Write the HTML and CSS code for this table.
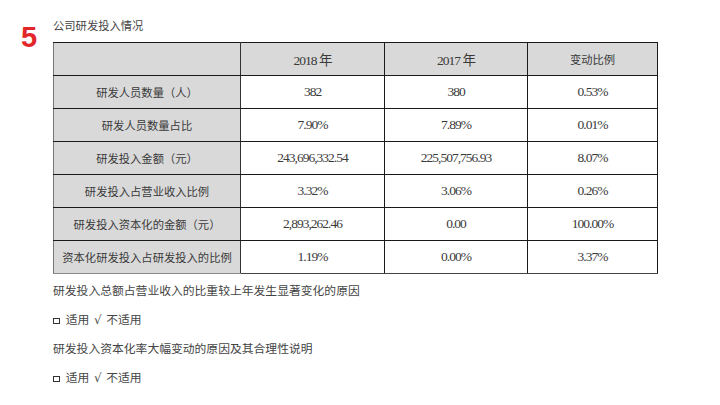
FILE: index.html
```html
<!DOCTYPE html>
<html lang="zh">
<head>
<meta charset="utf-8">
<link rel="stylesheet" href="styles.css">
</head>
<body>
<div class="page">
  <div class="num">5</div>
  <div class="content">
    <div class="title">公司研发投入情况</div>
    <table class="rd">
      <colgroup>
        <col class="c1"><col class="c2"><col class="c3"><col class="c4">
      </colgroup>
      <tr class="head">
        <td class="label"></td><td>2018 年</td><td>2017 年</td><td class="cn">变动比例</td>
      </tr>
      <tr><td class="label">研发人员数量（人）</td><td>382</td><td>380</td><td>0.53%</td></tr>
      <tr><td class="label">研发人员数量占比</td><td>7.90%</td><td>7.89%</td><td>0.01%</td></tr>
      <tr><td class="label">研发投入金额（元）</td><td>243,696,332.54</td><td>225,507,756.93</td><td>8.07%</td></tr>
      <tr><td class="label">研发投入占营业收入比例</td><td>3.32%</td><td>3.06%</td><td>0.26%</td></tr>
      <tr><td class="label">研发投入资本化的金额（元）</td><td>2,893,262.46</td><td>0.00</td><td>100.00%</td></tr>
      <tr><td class="label">资本化研发投入占研发投入的比例</td><td>1.19%</td><td>0.00%</td><td>3.37%</td></tr>
    </table>
    <p class="line first">研发投入总额占营业收入的比重较上年发生显著变化的原因</p>
    <p class="line"><span class="box"></span> 适用 <span class="chk">√</span> 不适用</p>
    <p class="line">研发投入资本化率大幅变动的原因及其合理性说明</p>
    <p class="line"><span class="box"></span> 适用 <span class="chk">√</span> 不适用</p>
  </div>
</div>
</body>
</html>
```

FILE: styles.css
```css
html, body {
  margin: 0;
  padding: 0;
  background: #ffffff;
}
.page {
  width: 720px;
  height: 405px;
  display: flex;
  font-family: "Liberation Serif", "Noto Sans CJK SC", serif;
  color: #3a3a3a;
}
.num {
  width: 53px;
  box-sizing: border-box;
  padding: 23px 0 0 21px;
  font-family: "Liberation Sans", Arial, sans-serif;
  font-weight: bold;
  font-size: 29px;
  color: #e3262a;
  line-height: 29px;
}
.content {
  padding-top: 16px;
}
.title {
  font-family: "Noto Sans CJK SC", sans-serif;
  font-size: 11.3px;
  line-height: 18px;
  height: 18px;
  margin-bottom: 8px;
  color: #444;
}
.rd {
  border-collapse: collapse;
  table-layout: fixed;
  width: 604px;
}
.c1 { width: 187px; }
.c2 { width: 144px; }
.c3 { width: 143px; }
.c4 { width: 130px; }
.rd td {
  height: 32px;
  padding: 0;
  text-align: center;
  border: 1.3px solid #1a1a1a;
  font-size: 13.5px;
  letter-spacing: -1px;
  color: #3a3a3a;
  font-family: "Liberation Serif", "Noto Sans CJK SC", serif;
  white-space: nowrap;
}
.rd td.label,
.rd td.cn {
  font-family: "Noto Sans CJK SC", sans-serif;
  font-size: 11.3px;
  letter-spacing: 0;
}
.rd td.label {
  background: #d9d9d9;
  border-left-color: #777;
  border-right-color: #333;
}
.rd tr.head td {
  background: #d9d9d9;
}
.rd tr:last-child td {
  border-bottom-color: #444;
}
.rd tr:last-child td.label {
  border-bottom-color: #888;
}
.line {
  margin: 0;
  height: 29px;
  line-height: 29px;
  font-family: "Noto Sans CJK SC", sans-serif;
  font-size: 11.8px;
  color: #444;
}
.line.first {
  margin-top: 1px;
}
.box {
  display: inline-block;
  width: 5px;
  height: 4px;
  border: 1.2px solid #333;
  vertical-align: middle;
  margin-right: 3px;
}
.chk {
  font-family: "DejaVu Serif", serif;
  font-size: 12px;
  margin: 0 2px;
}
```
